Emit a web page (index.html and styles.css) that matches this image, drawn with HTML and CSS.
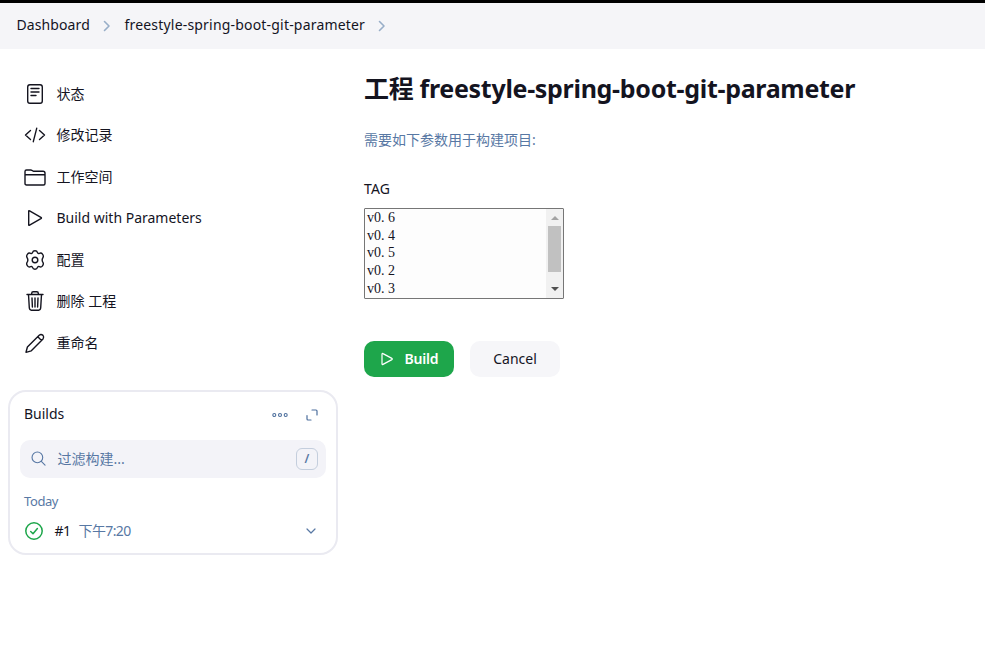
FILE: index.html
```html
<!DOCTYPE html>
<html lang="zh-CN">
<head>
<meta charset="utf-8">
<title>freestyle-spring-boot-git-parameter</title>
<link rel="stylesheet" href="styles.css">
</head>
<body>
<nav class="breadcrumbs">
  <a class="crumb-home">Dashboard</a>
  <svg class="chevron" viewBox="0 0 8 12"><path d="M1.500 1.500 6 6l-4.500 4.500"/></svg>
  <a class="crumb-job">freestyle-spring-boot-git-parameter</a>
  <svg class="chevron" viewBox="0 0 8 12"><path d="M1.500 1.500 6 6l-4.500 4.500"/></svg>
</nav>
<div class="page">
  <aside class="side">
    <ul class="tasks">
      <li><svg viewBox="0 0 22 22"><rect x="3.700" y="1.700" width="14.600" height="18.600" rx="2.200"/><path d="M7 5.500h8M7 9h8M7 12.500h5"/></svg><span>状态</span></li>
      <li><svg viewBox="0 0 22 22"><path d="M6.500 6.500 1.500 11l5 4.500M15.500 6.500l5 4.500-5 4.500M12.700 4.300 9.300 17.700"/></svg><span>修改记录</span></li>
      <li><svg viewBox="0 0 22 22"><path d="M1 17.500v-12q0-1.500 1.500-1.500h4.200q.8 0 1.400.6t1.400.6h9.500q2 0 2 2v10.300q0 1.500-1.500 1.500h-17Q1 19 1 17.500ZM1 8.700h20"/></svg><span>工作空间</span></li>
      <li><svg viewBox="0 0 22 22"><path d="M4.700 4.300v13.400q0 1 .9.500l11.300-6.500q1.100-.7 0-1.400L5.600 3.800q-.9-.5-.9.500Z"/></svg><span>Build with Parameters</span></li>
      <li><svg viewBox="0 0 22 22"><circle cx="11" cy="11" r="2.800"/><path d="M8.500 3.600q.5-1.900 2.500-1.900t2.500 1.900q.4 1.300 1.900.7 1.900-.8 3.100.9 1.500 2 .3 3.600-1.300 2.200 0 4.400 1.200 1.600-.3 3.600-1.200 1.700-3.100.9-1.500-.6-1.900.7-.5 1.900-2.500 1.900t-2.500-1.900q-.4-1.300-1.900-.7-1.900.8-3.100-.9-1.500-2-.3-3.600 1.300-2.200 0-4.400-1.200-1.600.3-3.600 1.200-1.700 3.100-.9 1.500.6 1.900-.7Z"/></svg><span>配置</span></li>
      <li><svg viewBox="0 0 22 22"><path d="M3 4.500h16M4.500 4.500l.8 13.300q.2 2.400 2 2.400h7.400q1.800 0 2-2.400l.8-13.300M7.700 4.500V3.300q0-1.500 1.500-1.500h3.600q1.500 0 1.500 1.500v1.200M8 8l.4 9M11 8v9M14 8l-.4 9"/></svg><span>删除 工程</span></li>
      <li><svg viewBox="0 0 22 22"><path d="m15.200 3.200-11.800 11.800L2 20.300l5.300-1.500L19 7q1.400-1.800 0-3.600-1.900-1.600-3.800-.2ZM13.800 4.700l3.700 3.700"/></svg><span>重命名</span></li>
    </ul>
    <section class="builds">
      <header class="builds-head">
        <h2>Builds</h2>
        <svg class="dots" viewBox="0 0 18 6"><circle cx="3.300" cy="3" r="1.500"/><circle cx="9" cy="3" r="1.500"/><circle cx="14.700" cy="3" r="1.500"/></svg>
        <svg class="expand" viewBox="0 0 12 12"><path d="M6 1h4q1 0 1 1v4M1 6.500V10q0 1 1 1h3"/></svg>
      </header>
      <div class="search">
        <svg viewBox="0 0 16 16"><circle cx="6.800" cy="6.800" r="5.700"/><path d="m11 11 4 4"/></svg>
        <span>过滤构建...</span>
        <kbd>/</kbd>
      </div>
      <div class="day">Today</div>
      <div class="build">
        <svg class="ok" viewBox="0 0 18 18"><circle cx="9" cy="9" r="8.200"/><path d="m5.700 9.500 2.300 2.300 4.400-5.300"/></svg>
        <span class="num">#1</span>
        <span class="time">下午7:20</span>
        <svg class="down" viewBox="0 0 10 6"><path d="m1 1 4 4 4-4"/></svg>
      </div>
    </section>
  </aside>
  <main class="main">
    <h1>工程 <span>freestyle-spring-boot-git-parameter</span></h1>
    <p class="hint">需要如下参数用于构建项目:</p>
    <div class="label">TAG</div>
    <div class="listbox">
      <div class="options"><div>v0<b>.</b>6</div><div>v0<b>.</b>4</div><div>v0<b>.</b>5</div><div>v0<b>.</b>2</div><div>v0<b>.</b>3</div></div>
      <div class="scrollbar"><i class="arrow-up"></i><i class="thumb"></i><i class="arrow-down"></i></div>
    </div>
    <div class="actions">
      <button class="btn primary"><svg viewBox="0 0 14 14"><path d="M2 2.200v9.600q0 1.200 1 .6l8.900-4.800q1-.6 0-1.200L3 1.600q-1-.6-1 .6Z"/></svg><span>Build</span></button>
      <button class="btn"><span>Cancel</span></button>
    </div>
  </main>
</div>
</body>
</html>
```
FILE: styles.css
```css
* { box-sizing: border-box; }
body {
  margin: 0;
  height: 645px;
  overflow: hidden;
  background: #fff;
  color: #14141f;
  font: 14px/20px "Noto Sans", "Noto Sans CJK SC", sans-serif;
}
svg { display: block; flex: none; fill: none; stroke: currentColor; stroke-linecap: round; stroke-linejoin: round; }
h1, h2, p, ul { margin: 0; padding: 0; }

.breadcrumbs {
  display: flex;
  align-items: center;
  height: 49px;
  padding: 0 16px 2px 16.500px;
  border-top: 3px solid #000;
  background: #f5f5f8;
}
.crumb-home { width: 73px; letter-spacing: .1px; white-space: nowrap; }
.crumb-job { width: 239.500px; letter-spacing: .19px; white-space: nowrap; }
.chevron { width: 8px; height: 12px; margin: 2px 13.500px 0 13.500px; stroke: #98aec8; stroke-width: 1.6; }

.page { display: flex; }
.side { width: 338px; padding: 24px 0 0 8px; }
.tasks { list-style: none; padding: .2px 0 0 16px; }
.tasks li { display: flex; align-items: center; gap: 10.500px; height: 41.500px; }
.tasks svg { width: 22px; height: 22px; stroke-width: 1.4; }

.builds {
  width: 330px;
  height: 165px;
  margin-top: 26.300px;
  padding: 0 10px;
  border: 2px solid #eaeaf1;
  border-radius: 18px;
}
.builds-head { display: flex; align-items: center; height: 48px; padding: 0 8px 4px 4px; color: #4d6f9d; }
.builds-head h2 { flex: 1; font-size: 14px; font-weight: 400; color: #14141f; }
.dots { width: 18px; height: 6px; margin-top: 3px; stroke-width: 1.1; }
.expand { width: 12px; height: 12px; margin: 3px 0 0 17px; stroke-width: 1.2; }
.search {
  display: flex;
  align-items: center;
  height: 38px;
  padding: 0 8px 0 11px;
  border-radius: 10px;
  background: #f3f3f8;
  color: #5878a4;
}
.search svg { width: 15px; height: 15px; stroke-width: 1.2; }
.search span { flex: 1; margin-left: 11.500px; }
.search kbd {
  width: 22px;
  height: 22px;
  border: 1px solid #c4cedd;
  border-radius: 6px;
  font: 600 12px/20px "Noto Sans", sans-serif;
  text-align: center;
}
.day { margin: 13px 0 0 4px; font-size: 13px; letter-spacing: -.4px; color: #5878a4; }
.build { display: flex; align-items: center; height: 20px; margin: 10px 10.500px 0 5px; color: #5878a4; }
.ok { width: 18px; height: 18px; color: #1ea64b; stroke-width: 1.5; }
.num { width: 24px; margin-left: 11.500px; letter-spacing: -.5px; color: #14141f; }
.time { flex: 1; letter-spacing: -.6px; }
.down { width: 10px; height: 6px; stroke-width: 1.2; }

.main { padding: 22px 0 0 26px; }
h1 { font-size: 25px; line-height: 34px; font-weight: 700; letter-spacing: -.3px; white-space: nowrap; }
.hint { margin-top: 25px; color: #5878a4; }
.label { margin-top: 29px; letter-spacing: .2px; }
.listbox {
  display: flex;
  width: 200px;
  height: 91px;
  margin-top: 9px;
  border: 1px solid #767676;
  border-radius: 1px;
  background: #fdfdfd;
}
.options { flex: 1; padding-left: 2px; font: 14px/17.700px "Liberation Serif", serif; }
.options b { font-weight: 400; letter-spacing: 3.500px; }
.scrollbar { display: flex; flex-direction: column; align-items: center; width: 17px; background: #f1f1f1; }
.arrow-up, .arrow-down { width: 0; height: 0; border: 4px solid transparent; }
.arrow-up { margin-top: 3px; border-bottom-color: #a3a3a3; }
.arrow-down { margin-top: 15px; border-top-color: #505050; }
.thumb { width: 13px; height: 46px; margin-top: 6px; background: #c1c1c1; }
.actions { display: flex; gap: 16px; margin-top: 42px; }
.btn {
  display: flex;
  align-items: center;
  justify-content: center;
  width: 90px;
  height: 36px;
  padding: 0;
  border: 0;
  border-radius: 10px;
  background: #f6f6f9;
  color: #14141f;
  font: inherit;
}
.btn.primary { gap: 11px; background: #1ea64b; color: #fff; font-weight: 600; }
.primary span { letter-spacing: -.2px; }
.btn svg { width: 14px; height: 14px; stroke-width: 1.2; }
```
